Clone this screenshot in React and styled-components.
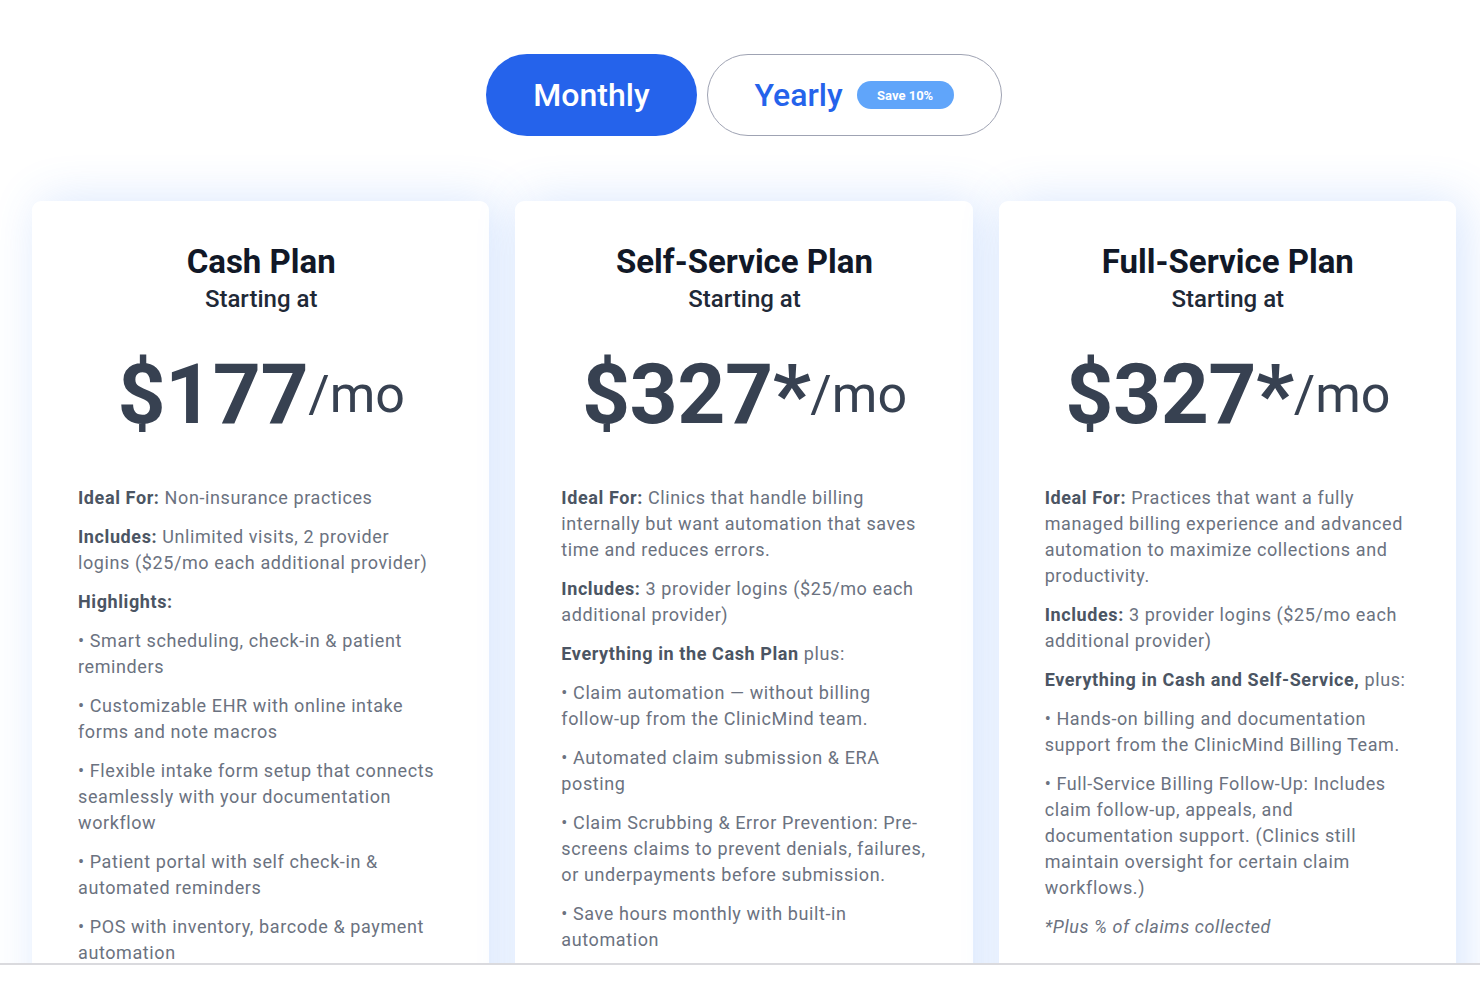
import React from "react";
import styled, { createGlobalStyle } from "styled-components";

const Global = createGlobalStyle`
  html, body { margin: 0; padding: 0; background: #ffffff; }
  body { font-family: Roboto, "Noto Sans", Arial, sans-serif; -webkit-font-smoothing: antialiased; }
  * { box-sizing: border-box; }
`;

const Frame = styled.div`
  height: 965px;
  overflow: hidden;
  border-bottom: 2px solid #dadade;
  background: #ffffff;
`;

const Section = styled.section`
  padding: 54px 24px 0 32px;
  display: flex;
  flex-direction: column;
  align-items: center;
`;

const Toggle = styled.div`
  display: flex;
  gap: 10px;
  align-items: center;
`;

const ToggleButton = styled.button`
  height: 82px;
  padding: 0 47px;
  border-radius: 999px;
  border: ${(p) => (p.$active ? "none" : "1.5px solid #9fa3b3")};
  background: ${(p) => (p.$active ? "#2563eb" : "#ffffff")};
  color: ${(p) => (p.$active ? "#ffffff" : "#2563eb")};
  font-family: Roboto, Arial, sans-serif;
  font-size: 32px;
  font-weight: 500;
  display: flex;
  align-items: center;
  gap: 14px;
  cursor: pointer;
`;

const Badge = styled.span`
  display: inline-flex;
  align-items: center;
  justify-content: center;
  width: 97px;
  height: 28px;
  border-radius: 999px;
  background: #60a5fa;
  color: #ffffff;
  font-size: 13px;
  font-weight: 700;
`;

const Cards = styled.div`
  align-self: stretch;
  margin-top: 65px;
  display: grid;
  grid-template-columns: repeat(3, 1fr);
  gap: 26px;
`;

const Card = styled.article`
  background: #ffffff;
  border-radius: 9px;
  padding: 41px 45px 40px 46px;
  min-height: 900px;
  box-shadow: 8px 0 48px rgba(59, 130, 246, 0.2);
`;

const Title = styled.h3`
  margin: 0;
  text-align: center;
  font-size: 33px;
  line-height: 40px;
  font-weight: 700;
  color: #111827;
`;

const Subtitle = styled.div`
  text-align: center;
  font-size: 24px;
  line-height: 34px;
  font-weight: 500;
  color: #1f2937;
`;

const Price = styled.div`
  margin-top: 35px;
  text-align: center;
  font-size: 84px;
  line-height: 88px;
  font-weight: 700;
  letter-spacing: -0.5px;
  color: #374151;
  white-space: nowrap;
`;

const Per = styled.span`
  font-size: 52px;
  font-weight: 400;
  letter-spacing: 0;
  vertical-align: 11px;
`;

const Body = styled.div`
  margin-top: 46px;
`;

const Para = styled.p`
  margin: 0 0 13px 0;
  font-size: 18px;
  line-height: 26px;
  letter-spacing: 0.6px;
  color: #6b7280;
  font-style: ${(p) => (p.$italic ? "italic" : "normal")};
`;

const Label = styled.strong`
  font-weight: 700;
  color: #4b5563;
`;

const plans = [
  {
    title: "Cash Plan",
    price: "$177",
    paras: [
      [["Ideal For:"], " Non-insurance practices"],
      [["Includes:"], " Unlimited visits, 2 provider logins ($25/mo each additional provider)"],
      [["Highlights:"]],
      ["• Smart scheduling, check-in & patient reminders"],
      ["• Customizable EHR with online intake forms and note macros"],
      ["• Flexible intake form setup that connects seamlessly with your documentation workflow"],
      ["• Patient portal with self check-in & automated reminders"],
      ["• POS with inventory, barcode & payment automation"],
    ],
  },
  {
    title: "Self-Service Plan",
    price: "$327*",
    paras: [
      [["Ideal For:"], " Clinics that handle billing internally but want automation that saves time and reduces errors."],
      [["Includes:"], " 3 provider logins ($25/mo each additional provider)"],
      [["Everything in the Cash Plan"], " plus:"],
      ["• Claim automation — without billing follow-up from the ClinicMind team."],
      ["• Automated claim submission & ERA posting"],
      ["• Claim Scrubbing & Error Prevention: Pre-screens claims to prevent denials, failures, or underpayments before submission."],
      ["• Save hours monthly with built-in automation"],
    ],
  },
  {
    title: "Full-Service Plan",
    price: "$327*",
    paras: [
      [["Ideal For:"], " Practices that want a fully managed billing experience and advanced automation to maximize collections and productivity."],
      [["Includes:"], " 3 provider logins ($25/mo each additional provider)"],
      [["Everything in Cash and Self-Service,"], " plus:"],
      ["• Hands-on billing and documentation support from the ClinicMind Billing Team."],
      ["• Full-Service Billing Follow-Up: Includes claim follow-up, appeals, and documentation support. (Clinics still maintain oversight for certain claim workflows.)"],
    ],
    note: "*Plus % of claims collected",
  },
];

export default function App() {
  return (
    <>
      <Global />
      <Frame>
        <Section>
          <Toggle>
            <ToggleButton $active>Monthly</ToggleButton>
            <ToggleButton>
              Yearly <Badge>Save 10%</Badge>
            </ToggleButton>
          </Toggle>
          <Cards>
            {plans.map((p) => (
              <Card key={p.title}>
                <Title>{p.title}</Title>
                <Subtitle>Starting at</Subtitle>
                <Price>
                  {p.price}
                  <Per>/mo</Per>
                </Price>
                <Body>
                  {p.paras.map((parts, i) => (
                    <Para key={i}>
                      {parts.map((part, j) =>
                        Array.isArray(part) ? <Label key={j}>{part[0]}</Label> : <React.Fragment key={j}>{part}</React.Fragment>
                      )}
                    </Para>
                  ))}
                  {p.note && <Para $italic>{p.note}</Para>}
                </Body>
              </Card>
            ))}
          </Cards>
        </Section>
      </Frame>
    </>
  );
}
